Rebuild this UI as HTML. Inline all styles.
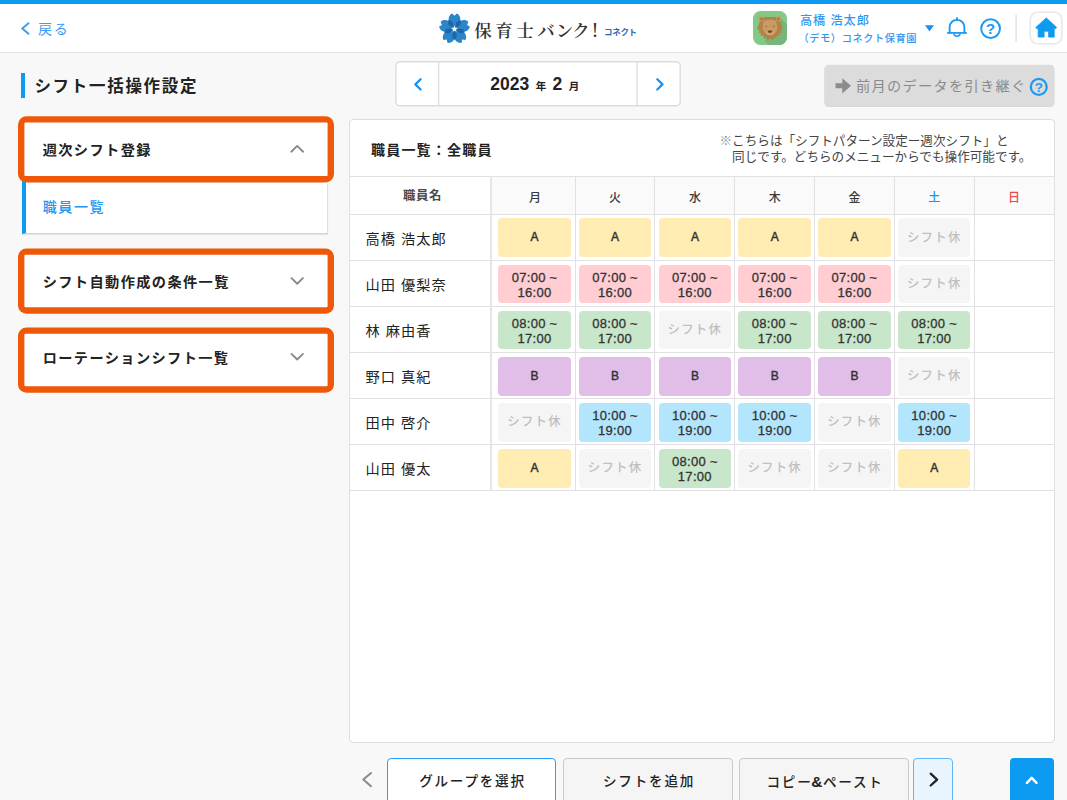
<!DOCTYPE html>
<html lang="ja">
<head>
<meta charset="utf-8">
<title>シフト一括操作設定</title>
<style>
*{box-sizing:border-box;margin:0;padding:0}
html,body{width:1067px;height:800px;overflow:hidden}
body{font-family:"Liberation Sans","Noto Sans CJK JP",sans-serif;background:#f8f8f8;color:#222;position:relative}
.abs{position:absolute}
svg{position:absolute;overflow:visible}
#topbar{left:0;top:0;width:1067px;height:4px;background:#0d9bf2}
#header{left:0;top:4px;width:1067px;height:49px;background:#fff;border-bottom:1px solid #e2e2e2}
#back{left:38px;top:19px;color:#3d9df5;font-size:14px;letter-spacing:1.7px;line-height:20px;white-space:nowrap}
#logo-text{left:474.2px;top:16.8px;font-family:"Liberation Serif","Noto Serif CJK SC",serif;font-size:17.5px;font-weight:600;line-height:28px;letter-spacing:0;color:#333;white-space:nowrap}
#logo-sub{left:604px;top:25.5px;font-size:8.5px;font-weight:bold;color:#2a6db5;line-height:12px;white-space:nowrap;letter-spacing:-.3px}
#uname{left:800px;top:13.5px;font-size:12.2px;letter-spacing:.9px;font-weight:500;line-height:15px;color:#2f96f3;white-space:nowrap}
#uorg{left:798.5px;top:30.5px;font-size:10.2px;letter-spacing:.6px;font-weight:500;line-height:15px;color:#2f96f3;white-space:nowrap}
#title-bar{left:21px;top:73px;width:4px;height:25px;background:#0d9bf2}
#title{left:34.4px;top:74px;font-size:16.5px;font-weight:bold;line-height:25px;letter-spacing:1.7px;white-space:nowrap;color:#222}
.obox{left:18px;width:316px}
.obox span{position:absolute;left:24.7px;margin-top:.3px;font-size:14.2px;font-weight:bold;line-height:22px;letter-spacing:1.4px;white-space:nowrap;color:#222}
#sub{left:21.5px;top:180px;width:306.5px;height:53.5px;background:#fff;border-left:4px solid #0d9bf2;border-right:1px solid #e0e0e0;border-bottom:1px solid #d4d4d4;box-shadow:0 1px 1px rgba(0,0,0,.08)}
#sub span{position:absolute;left:17.2px;top:17.4px;font-size:14px;font-weight:500;line-height:20px;color:#2196f3;letter-spacing:1.6px}
#mtext{left:435.8px;top:69.5px;width:198px;text-align:center;font-weight:bold;font-size:17.5px;word-spacing:1.6px;line-height:28px;color:#222;white-space:nowrap}
#mtext small{font-size:10.5px}
#inherit{left:824.5px;top:64.5px;width:230px;height:41.5px}
#inherit span{position:absolute;left:31.5px;top:10.3px;font-size:14.2px;line-height:22px;color:#8a8a8a;letter-spacing:1.3px;white-space:nowrap}
#card{left:349px;top:119px;width:705.5px;height:623.5px;background:#fff;border:1px solid #ddd;border-radius:4px}
#ctitle{left:371px;top:139px;font-size:14px;font-weight:bold;line-height:22px;letter-spacing:1.2px;color:#222;white-space:nowrap}
#cnote{left:719.5px;top:132.5px;font-size:12.6px;line-height:16.9px;color:#444;white-space:nowrap;text-align:left}
table{position:absolute;left:349px;top:176px;width:705.5px;border-collapse:collapse;table-layout:fixed}
th,td{border:1px solid #e1e1e1;padding:0;height:46.06px;vertical-align:middle}
th{height:38px;padding-top:1.4px;background:#fafafa;font-size:12px;font-weight:500;color:#3a3a3a;text-align:center}
th.nm{padding:0 0 1.6px 5px;font-size:12.4px;font-weight:bold;background:#fff;color:#4a4a4a;letter-spacing:.6px}
td.nm{font-size:14.2px;font-weight:400;padding-left:15.6px;letter-spacing:1.05px;text-align:left;color:#222}
td.nm,th.nm{border-right:2px solid #e6e6e6}
td{text-align:center}
.c{display:flex;align-items:center;justify-content:center;margin:.8px auto 0;width:72.4px;height:38.9px;border-radius:4px;font-size:13px;line-height:15px;color:#333;text-align:center;letter-spacing:.3px}
td.m .c{margin-left:5.9px;width:73.2px}
.t{padding-top:2px;-webkit-text-stroke:.3px #333}
.y,.v{font-size:12px;-webkit-text-stroke:.45px #333;letter-spacing:0}
.y{background:#ffecb3}.p{background:#ffcdd2}.g{background:#c8e6c9}.v{background:#e1bee7}.b{background:#b3e5fc}.o{background:#f5f5f5;color:#c0c0c0;font-size:12.4px;font-weight:500;letter-spacing:1.25px;padding-top:1px}
.btn{top:757.5px;height:50px;border:1px solid #c8c8c8;border-radius:4px;background:#f5f5f5;font-size:13.6px;font-weight:500;color:#222;text-align:center;line-height:45px;letter-spacing:1.75px;padding-left:1.75px}
</style>
</head>
<body>
<div id="topbar" class="abs"></div>
<div id="header" class="abs"></div>
<svg style="left:0;top:0" width="1067" height="53" viewBox="0 0 1067 53">
<polyline points="28.5,23.2 22.3,28.5 28.5,33.8" fill="none" stroke="#3d9df5" stroke-width="2" stroke-linecap="round" stroke-linejoin="round"/>
<g transform="translate(439.6 13.4) scale(.96)">
<path d="M0 0 C-2.6 -2.2 -6.3 -5.5 -6.1 -10 C-6 -12.8 -4.6 -15.2 -2.5 -16 L0 -13.7 L2.5 -16 C4.6 -15.2 6 -12.8 6.1 -10 C6.3 -5.5 2.6 -2.2 0 0 Z" transform="translate(15.5 16.2) rotate(0)" fill="#2b86c8"/>
<path d="M0 0 C-2.6 -2.2 -6.3 -5.5 -6.1 -10 C-6 -12.8 -4.6 -15.2 -2.5 -16 L0 -13.7 L2.5 -16 C4.6 -15.2 6 -12.8 6.1 -10 C6.3 -5.5 2.6 -2.2 0 0 Z" transform="translate(15.5 16.2) rotate(72)" fill="#2b86c8"/>
<path d="M0 0 C-2.6 -2.2 -6.3 -5.5 -6.1 -10 C-6 -12.8 -4.6 -15.2 -2.5 -16 L0 -13.7 L2.5 -16 C4.6 -15.2 6 -12.8 6.1 -10 C6.3 -5.5 2.6 -2.2 0 0 Z" transform="translate(15.5 16.2) rotate(144)" fill="#2b86c8"/>
<path d="M0 0 C-2.6 -2.2 -6.3 -5.5 -6.1 -10 C-6 -12.8 -4.6 -15.2 -2.5 -16 L0 -13.7 L2.5 -16 C4.6 -15.2 6 -12.8 6.1 -10 C6.3 -5.5 2.6 -2.2 0 0 Z" transform="translate(15.5 16.2) rotate(216)" fill="#2b86c8"/>
<path d="M0 0 C-2.6 -2.2 -6.3 -5.5 -6.1 -10 C-6 -12.8 -4.6 -15.2 -2.5 -16 L0 -13.7 L2.5 -16 C4.6 -15.2 6 -12.8 6.1 -10 C6.3 -5.5 2.6 -2.2 0 0 Z" transform="translate(15.5 16.2) rotate(288)" fill="#2b86c8"/>
<path d="M0 -2.4 C-3 -5 -3.3 -8.6 0 -11.2 C3.3 -8.6 3 -5 0 -2.4 Z" transform="translate(15.5 16.2) rotate(36)" fill="#1d66ad"/>
<path d="M0 -2.4 C-3 -5 -3.3 -8.6 0 -11.2 C3.3 -8.6 3 -5 0 -2.4 Z" transform="translate(15.5 16.2) rotate(108)" fill="#1d66ad"/>
<path d="M0 -2.4 C-3 -5 -3.3 -8.6 0 -11.2 C3.3 -8.6 3 -5 0 -2.4 Z" transform="translate(15.5 16.2) rotate(180)" fill="#1d66ad"/>
<path d="M0 -2.4 C-3 -5 -3.3 -8.6 0 -11.2 C3.3 -8.6 3 -5 0 -2.4 Z" transform="translate(15.5 16.2) rotate(252)" fill="#1d66ad"/>
<path d="M0 -2.4 C-3 -5 -3.3 -8.6 0 -11.2 C3.3 -8.6 3 -5 0 -2.4 Z" transform="translate(15.5 16.2) rotate(324)" fill="#1d66ad"/>
<polygon points="15.50,12.60 16.38,14.99 18.92,15.09 16.93,16.66 17.62,19.11 15.50,17.70 13.38,19.11 14.07,16.66 12.08,15.09 14.62,14.99" fill="#fff"/>
</g>
<g transform="translate(753 11)">
<rect x="0" y="0" width="34" height="34" rx="7.5" fill="#83c886"/>
<path d="M13 30 L34 34 L34 12 L28 8 Z" fill="#7ab87d" opacity=".0"/>
<clipPath id="avc"><rect x="0" y="0" width="34" height="34" rx="7.5"/></clipPath>
<path d="M27.5 7 L40 19.5 L40 40 L20 40 L11 29 Z" fill="#78b47b" clip-path="url(#avc)"/>
<path d="M9.5 6 L24.5 6 L27.5 11 L30 18.5 L27.5 19 L28.5 22 L26 22 L26.5 25 L23.5 24.5 L23.5 27.5 L21 26.5 L20 29 L17 27.5 L14.5 29 L13.5 26.5 L10.5 27.5 L10.5 24.5 L7.5 25 L8 22 L5.5 22 L6.5 19 L4 18.5 L6.5 11 Z" fill="#b28347"/>
<circle cx="8.2" cy="7.8" r="2.7" fill="#c79b63"/><circle cx="8.5" cy="8.1" r="1.4" fill="#a8763c"/>
<circle cx="25.6" cy="7.8" r="2.7" fill="#c79b63"/><circle cx="25.3" cy="8.1" r="1.4" fill="#a8763c"/>
<path d="M11 10 Q17 7.5 23 10 L24.5 16 Q24 21 20.5 23.5 Q17 25.2 13.5 23.5 Q10 21 9.5 16 Z" fill="#c79b63"/>
<ellipse cx="17" cy="21" rx="4" ry="3" fill="#d0a66f"/>
<circle cx="13.2" cy="15.4" r=".9" fill="#a8763c"/><circle cx="20.6" cy="15.4" r=".9" fill="#a8763c"/>
<path d="M14.3 19.7 Q17 18.7 19.7 19.7 Q19 22 17 22 Q15 22 14.3 19.7 Z" fill="#7c4a1e"/>
</g>
<polygon points="925,25.3 934,25.3 929.5,31.4" fill="#1c90ee"/>
<g fill="none" stroke="#1e9af3" stroke-width="1.9" stroke-linecap="round" stroke-linejoin="round">
<path d="M949.6 32.9 V27.3 C949.6 23 952.8 19.9 957 19.9 C961.2 19.9 964.4 23 964.4 27.3 V32.9"/>
<path d="M947.8 32.9 H966.2"/>
<path d="M957 17.9 V19.5"/>
<path d="M953.9 33.6 A3.15 3.15 0 0 0 960.1 33.6" stroke-width="1.6"/>
<circle cx="990.6" cy="28.6" r="9.4" stroke-width="2"/>
</g>
<text x="990.6" y="34.2" text-anchor="middle" font-family="Liberation Sans, sans-serif" font-weight="bold" font-size="15.5" fill="#1e9af3">?</text>
<rect x="1015.3" y="14.6" width="1.6" height="27.2" fill="#e6e6e6"/>
<rect x="1030.3" y="12.2" width="31.6" height="31.6" rx="7.5" fill="#fff" stroke="#e8e8e8" stroke-width="1.6"/>
<path d="M1046.3 17.9 L1056.6 27.4 L1055.8 28.6 H1054.2 V37.1 H1048.6 V31.2 H1044.1 V37.1 H1038.2 V28.6 H1036.6 L1035.8 27.4 Z" fill="#0d9bf2" stroke="#0d9bf2" stroke-width=".8" stroke-linejoin="round"/>
</svg>
<div id="back" class="abs">戻る</div>
<div id="logo-text" class="abs"><span style="letter-spacing:3.5px">保育士</span><span style="letter-spacing:1px">バ</span><span style="letter-spacing:-1px">ン</span><span style="letter-spacing:1.7px">ク</span><span style="letter-spacing:0;font-size:21px;font-weight:400;line-height:20px">!</span></div>
<div id="logo-sub" class="abs">コネクト</div>
<div id="uname" class="abs">高橋 浩太郎</div>
<div id="uorg" class="abs">（デモ）コネクト保育園</div>

<div id="title-bar" class="abs"></div>
<div id="title" class="abs">シフト一括操作設定</div>

<div id="sub" class="abs"><span>職員一覧</span></div>
<svg style="left:0;top:100px" width="340" height="300" viewBox="0 100 340 300"><rect x="18" y="116.2" width="316" height="66.2" rx="8.5" fill="#ef5808"/><rect x="24.4" y="122.6" width="303.2" height="53.3" rx="1" fill="#fff"/><rect x="18" y="248.4" width="316" height="65.3" rx="8.5" fill="#ef5808"/><rect x="24.4" y="254.8" width="303.2" height="52.5" rx="1" fill="#fff"/><rect x="18" y="327.4" width="316" height="65.3" rx="8.5" fill="#ef5808"/><rect x="24.4" y="333.8" width="303.2" height="52.5" rx="1" fill="#fff"/></svg>
<div class="obox abs" style="top:116.2px;height:66.2px"><span style="top:22.3px">週次シフト登録</span></div>
<div class="obox abs" style="top:248.4px;height:65.3px"><span style="top:22.5px">シフト自動作成の条件一覧</span></div>
<div class="obox abs" style="top:327.4px;height:65.3px"><span style="top:19.7px">ローテーションシフト一覧</span></div>
<svg style="left:0;top:100px" width="340" height="300" viewBox="0 100 340 300" fill="none" stroke="#8a8a8a" stroke-width="1.9" stroke-linecap="round" stroke-linejoin="round">
<polyline points="291.3,151.7 297.2,145.9 303.1,151.7"/>
<polyline points="291.5,278.1 297.2,283.7 302.9,278.1"/>
<polyline points="291.5,353.9 297.2,359.5 302.9,353.9"/>
</svg>

<svg style="left:390px;top:56px" width="296" height="56" viewBox="390 56 296 56" fill="none" stroke-linecap="round" stroke-linejoin="round">
<rect x="395.8" y="61.7" width="284.4" height="44.1" rx="4.2" fill="#fff" stroke="#dcdcdc" stroke-width="1.4"/>
<path d="M438.6 62.2 V105.3 M637 62.2 V105.3" stroke="#dedede" stroke-width="1.4" stroke-linecap="butt"/>
<polyline points="420.6,79.3 415.4,84.4 420.6,89.5" stroke="#1993f3" stroke-width="2.3"/>
<polyline points="657.3,79.3 662.5,84.4 657.3,89.5" stroke="#1993f3" stroke-width="2.3"/>
</svg>
<div id="mtext" class="abs">2023 <small>年</small> 2 <small>月</small></div>
<svg style="left:820px;top:60px" width="240" height="52" viewBox="820 60 240 52">
<rect x="824.4" y="65.7" width="230" height="41.2" rx="4.2" fill="#000" opacity=".13"/>
<rect x="824.4" y="64.7" width="230" height="41.3" rx="4.2" fill="#dcdcdc"/>
<path d="M835.5 83.3 H842.3 V78.2 L851 85.8 L842.3 93.4 V88.2 H835.5 Z" fill="#8c8c8c"/>
<circle cx="1038.75" cy="86.9" r="7.95" fill="none" stroke="#1e9af3" stroke-width="2.3"/>
<text x="1038.75" y="91.7" text-anchor="middle" font-family="Liberation Sans, sans-serif" font-weight="bold" font-size="13.5" fill="#1e9af3">?</text>
</svg>
<div id="inherit" class="abs"><span>前月のデータを引き継ぐ</span></div>


<div id="card" class="abs"></div>
<div id="ctitle" class="abs">職員一覧：全職員</div>
<div id="cnote" class="abs"><span style="color:#8a8a8a">※</span>こちらは「シフトパターン設定ー週次シフト」と<br>　同じです。どちらのメニューからでも操作可能です。</div>

<table>
<colgroup><col style="width:141.6px"><col style="width:84.1px"><col><col><col><col><col><col></colgroup>
<tr><th class="nm">職員名</th><th style="padding-left:3.4px">月</th><th>火</th><th>水</th><th>木</th><th>金</th><th style="color:#1c97ea">土</th><th style="color:#ec4a4a">日</th></tr>
<tr><td class="nm">高橋 浩太郎</td><td class="m"><div class="c y">A</div></td><td><div class="c y">A</div></td><td><div class="c y">A</div></td><td><div class="c y">A</div></td><td><div class="c y">A</div></td><td><div class="c o">シフト休</div></td><td></td></tr>
<tr><td class="nm">山田 優梨奈</td><td class="m"><div class="c p t">07:00 ~<br>16:00</div></td><td><div class="c p t">07:00 ~<br>16:00</div></td><td><div class="c p t">07:00 ~<br>16:00</div></td><td><div class="c p t">07:00 ~<br>16:00</div></td><td><div class="c p t">07:00 ~<br>16:00</div></td><td><div class="c o">シフト休</div></td><td></td></tr>
<tr><td class="nm">林 麻由香</td><td class="m"><div class="c g t">08:00 ~<br>17:00</div></td><td><div class="c g t">08:00 ~<br>17:00</div></td><td><div class="c o">シフト休</div></td><td><div class="c g t">08:00 ~<br>17:00</div></td><td><div class="c g t">08:00 ~<br>17:00</div></td><td><div class="c g t">08:00 ~<br>17:00</div></td><td></td></tr>
<tr><td class="nm">野口 真紀</td><td class="m"><div class="c v">B</div></td><td><div class="c v">B</div></td><td><div class="c v">B</div></td><td><div class="c v">B</div></td><td><div class="c v">B</div></td><td><div class="c o">シフト休</div></td><td></td></tr>
<tr><td class="nm">田中 啓介</td><td class="m"><div class="c o">シフト休</div></td><td><div class="c b t">10:00 ~<br>19:00</div></td><td><div class="c b t">10:00 ~<br>19:00</div></td><td><div class="c b t">10:00 ~<br>19:00</div></td><td><div class="c o">シフト休</div></td><td><div class="c b t">10:00 ~<br>19:00</div></td><td></td></tr>
<tr><td class="nm">山田 優太</td><td class="m"><div class="c y">A</div></td><td><div class="c o">シフト休</div></td><td><div class="c g t">08:00 ~<br>17:00</div></td><td><div class="c o">シフト休</div></td><td><div class="c o">シフト休</div></td><td><div class="c y">A</div></td><td></td></tr>
</table>

<svg style="left:360px;top:757px" width="20" height="43" viewBox="360 757 20 43" fill="none" stroke="#8a8a8a" stroke-width="2" stroke-linecap="round" stroke-linejoin="round"><polyline points="371,773 363.3,779.6 371,786.2"/></svg>
<div class="btn abs" style="left:386.8px;width:169.6px;background:#fff;border-color:#2f9df4">グループを選択</div>
<div class="btn abs" style="left:563.3px;width:169.8px">シフトを追加</div>
<div class="btn abs" style="left:739.4px;width:169.6px">コピ<span style="letter-spacing:.6px">ー</span><span style="font-size:15.5px;font-weight:bold;letter-spacing:.4px;-webkit-text-stroke:0">&amp;</span>ペースト</div>
<div class="btn abs" style="left:913.4px;width:39.8px;background:#e8f5fe;border-color:#64b5f6"></div>
<div class="abs" style="left:1010.4px;top:757.5px;width:44px;height:50px;background:#0d9bf2;border-radius:4px"></div>
<svg style="left:900px;top:757px" width="167" height="43" viewBox="900 757 167 43" fill="none" stroke-linecap="round" stroke-linejoin="round">
<polyline points="930.7,773.7 937.1,779.6 930.7,785.5" stroke="#222" stroke-width="2.3"/>
<polyline points="1026.9,782.8 1031.7,777.9 1036.5,782.8" stroke="#fff" stroke-width="2.5"/>
</svg>
</body>
</html>
